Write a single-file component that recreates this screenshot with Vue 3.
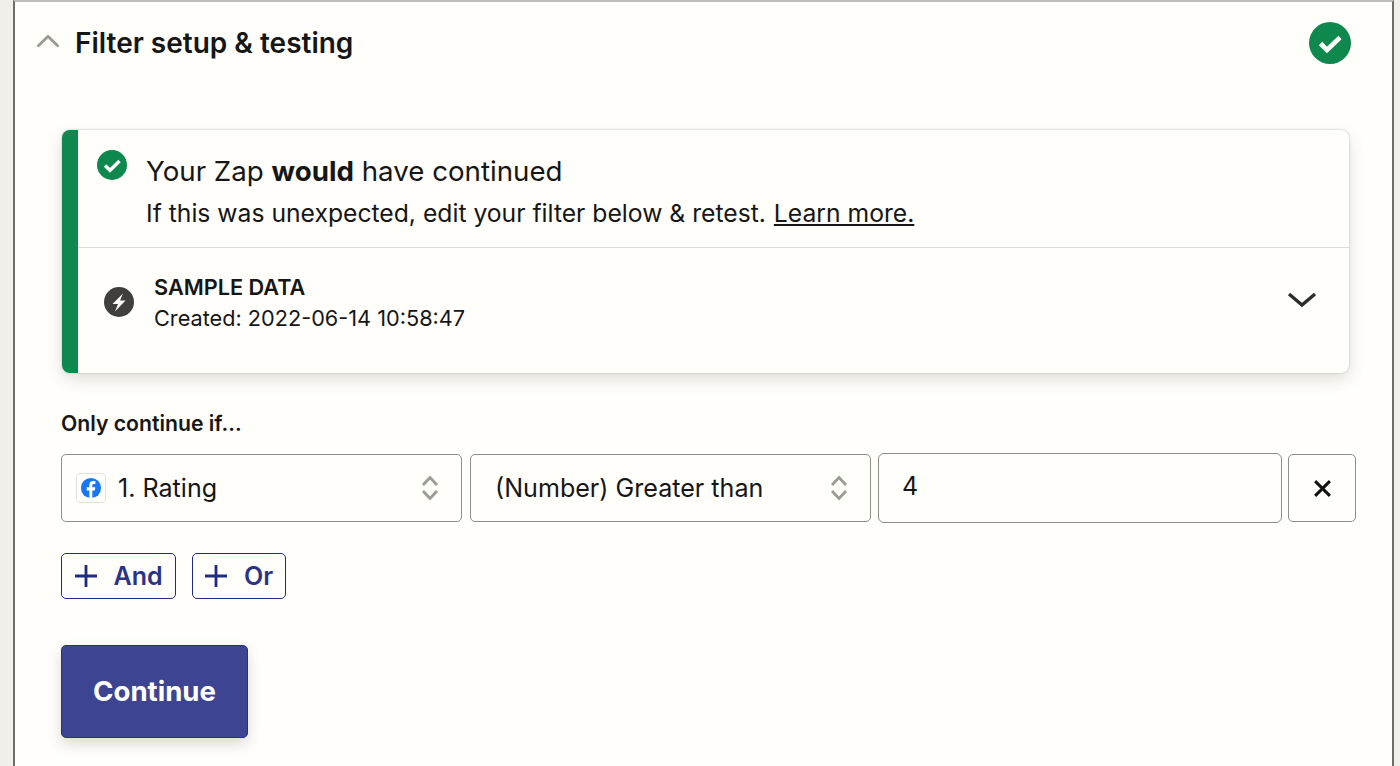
<template>
  <div class="page">
    <section class="panel">
      <header class="panel-header">
        <div class="title-wrap">
          <svg class="collapse-icon" viewBox="0 0 24 14" fill="none">
            <path d="M1.5 12.5 12 2.5l10.5 10" stroke="#9b9a93" stroke-width="2.8" />
          </svg>
          <h2>Filter setup &amp; testing</h2>
        </div>
        <svg class="status-icon" viewBox="0 0 42 42">
          <circle cx="21" cy="21" r="21" fill="#0f884e" />
          <path d="M11.5 21.5 18 28 31 15.5" fill="none" stroke="#fffefb" stroke-width="4.6" />
        </svg>
      </header>

      <div class="result-card">
        <div class="result-top">
          <svg class="small-check" viewBox="0 0 30 30">
            <circle cx="15" cy="15" r="15" fill="#0f884e" />
            <path d="M8 15.5 13 20.3 22.5 11" fill="none" stroke="#fffefb" stroke-width="3.4" />
          </svg>
          <div class="result-text">
            <p class="result-title">Your Zap <strong>would</strong> have continued</p>
            <p class="result-sub">If this was unexpected, edit your filter below &amp; retest. <a href="#">Learn more.</a></p>
          </div>
        </div>
        <div class="result-bottom">
          <svg class="bolt-icon" viewBox="0 0 30 30">
            <circle cx="15" cy="15" r="15" fill="#403f3e" />
            <path d="M19 6.5 8.5 17H14L11 24.5 21.5 13.5H16z" fill="#fffefb" />
          </svg>
          <div class="sample-text">
            <div class="sample-title">SAMPLE DATA</div>
            <div class="sample-date">Created: 2022-06-14 10:58:47</div>
          </div>
          <svg class="expand-icon" viewBox="0 0 30 18" fill="none">
            <path d="M2 3 15 14 28 3" stroke="#2d2e2e" stroke-width="3.4" />
          </svg>
        </div>
      </div>

      <label class="filter-label">Only continue if...</label>
      <div class="filter-row">
        <div class="select-box first">
          <span class="app-badge">
            <svg viewBox="0 0 24 24">
              <circle cx="12" cy="12" r="11" fill="#1877f2" />
              <path d="M13.4 23v-8.4h2.8l.5-3.3h-3.3V9.2c0-1 .4-1.7 1.8-1.7h1.6V4.6c-.6-.1-1.5-.2-2.4-.2-2.6 0-4.2 1.5-4.2 4.3v2.6H7.3v3.3h2.9V23z" fill="#fff" />
            </svg>
          </span>
          <span class="select-text">1. Rating</span>
          <svg class="updown" viewBox="0 0 18 26" fill="none">
            <path d="M2 10 9 2.5l7 7.5M2 16l7 7.5 7-7.5" stroke="#9b9a93" stroke-width="2.8" />
          </svg>
        </div>
        <div class="select-box second">
          <span class="select-text">(Number) Greater than</span>
          <svg class="updown" viewBox="0 0 18 26" fill="none">
            <path d="M2 10 9 2.5l7 7.5M2 16l7 7.5 7-7.5" stroke="#9b9a93" stroke-width="2.8" />
          </svg>
        </div>
        <div class="value-box">4</div>
        <button class="remove-btn" type="button">
          <svg viewBox="0 0 18 18" fill="none">
            <path d="M2 2 16 16M16 2 2 16" stroke="#111" stroke-width="2.8" />
          </svg>
        </button>
      </div>

      <div class="logic-row">
        <button v-for="item in logicButtons" :key="item" class="logic-btn" type="button">
          <svg viewBox="0 0 22 22" fill="none">
            <path d="M11 0v22M0 11h22" stroke="#1f2a85" stroke-width="2.8" />
          </svg>
          <span>{{ item }}</span>
        </button>
      </div>

      <button class="continue-btn" type="button">Continue</button>
    </section>
  </div>
</template>

<script setup>
const logicButtons = ['And', 'Or'];
</script>

<style>
html, body {
  margin: 0;
  background: #f0efe9;
}
</style>

<style scoped>
.page {
  height: 766px;
  overflow: hidden;
  font-family: Inter, "Liberation Sans", sans-serif;
  color: #161616;
}

.panel {
  box-sizing: border-box;
  width: 1381px;
  height: 766px;
  margin-left: 13px;
  padding: 0 36px 0 46px;
  background: #fffefb;
  border-left: 2px solid #6d6d6a;
  border-right: 2px solid #6d6d6a;
  border-top: 2px solid #bdbcb8;
}

.panel-header {
  display: flex;
  justify-content: space-between;
  align-items: center;
  height: 82px;
  margin-left: -25px;
  padding-right: 5px;
}

.title-wrap {
  display: flex;
  align-items: center;
  gap: 15px;
}

.collapse-icon {
  width: 24px;
  height: 14px;
  margin-top: -4px;
}

h2 {
  margin: 0;
  font-size: 28px;
  font-weight: 600;
  line-height: 36px;
}

.status-icon {
  width: 42px;
  height: 42px;
}

.result-card {
  box-sizing: border-box;
  width: 1287px;
  height: 243px;
  margin-top: 46px;
  margin-left: 1px;
  background: #fffefb;
  border-left: 16px solid #0f884e;
  border-radius: 8px;
  box-shadow: 0 0 2px #b4b4ac, 0 6px 16px rgba(60, 55, 40, 0.16);
}

.result-top {
  box-sizing: border-box;
  display: flex;
  height: 118px;
  padding: 20px 0 0 19px;
  gap: 19px;
  border-bottom: 1px solid #dedcd6;
}

.small-check {
  width: 30px;
  height: 30px;
  flex: none;
}

.result-text {
  padding-top: 1px;
}

.result-text p {
  margin: 0;
}

.result-title {
  font-size: 27.7px;
  line-height: 40px;
}

.result-title strong {
  font-weight: 700;
}

.result-sub {
  font-size: 24.7px;
  line-height: 45px;
}

.result-sub a {
  margin-left: 1px;
  color: inherit;
}

.result-bottom {
  display: flex;
  align-items: center;
  height: 125px;
  padding: 0 32px 17px 26px;
  box-sizing: border-box;
}

.bolt-icon {
  width: 30px;
  height: 30px;
  flex: none;
  margin-right: 20px;
}

.sample-text {
  flex: 1;
}

.sample-title {
  font-size: 21.7px;
  font-weight: 600;
  line-height: 32px;
}

.sample-date {
  font-size: 21.7px;
  line-height: 31px;
}

.expand-icon {
  width: 30px;
  height: 18px;
  margin-bottom: 5px;
}

.filter-label {
  display: block;
  margin-top: 36px;
  font-size: 21.2px;
  font-weight: 600;
  line-height: 28px;
}

.filter-row {
  display: flex;
  align-items: center;
  margin-top: 16px;
  height: 70px;
}

.select-box {
  box-sizing: border-box;
  display: flex;
  align-items: center;
  flex: none;
  width: 401px;
  height: 68px;
  border: 1.5px solid #8e8d88;
  border-radius: 5px;
  font-size: 25.1px;
}

.first {
  padding: 0 22px 0 14px;
  margin-right: 8px;
}

.second {
  padding: 0 22px 0 24px;
  margin-right: 7px;
}

.app-badge {
  box-sizing: border-box;
  display: flex;
  align-items: center;
  justify-content: center;
  width: 30px;
  height: 30px;
  margin-right: 12px;
  border: 1px solid #e3e1dc;
  border-radius: 4px;
}

.app-badge svg {
  width: 22px;
  height: 22px;
}

.select-text {
  flex: 1;
}

.updown {
  width: 18px;
  height: 26px;
}

.value-box {
  box-sizing: border-box;
  flex: none;
  width: 404px;
  height: 70px;
  padding: 14px 23px;
  border: 1.5px solid #8e8d88;
  border-radius: 6px;
  font-size: 25px;
  line-height: 36px;
  margin-right: 6px;
}

.remove-btn {
  box-sizing: border-box;
  display: flex;
  align-items: center;
  justify-content: center;
  flex: none;
  width: 68px;
  height: 68px;
  padding: 0;
  background: none;
  border: 1.5px solid #8e8d88;
  border-radius: 5px;
}

.remove-btn svg {
  width: 19px;
  height: 19px;
}

.logic-row {
  display: flex;
  gap: 16px;
  margin-top: 30px;
}

.logic-btn {
  box-sizing: border-box;
  display: flex;
  align-items: center;
  gap: 17px;
  height: 46px;
  padding: 0 12px 0 12.5px;
  background: none;
  border: 1.5px solid #1c2a8c;
  border-radius: 5px;
  color: #2c3387;
  font-family: inherit;
  font-size: 25px;
  font-weight: 600;
}

.logic-btn svg {
  width: 22px;
  height: 22px;
}

.continue-btn {
  display: block;
  box-sizing: border-box;
  width: 187px;
  height: 93px;
  margin-top: 46px;
  padding: 0 0 2px;
  background: #3d4592;
  border: 1px solid #23308f;
  border-radius: 5px;
  box-shadow: 0 6px 14px rgba(60, 55, 40, 0.18);
  color: #fff;
  font-family: inherit;
  font-size: 27.6px;
  font-weight: 700;
}
</style>
